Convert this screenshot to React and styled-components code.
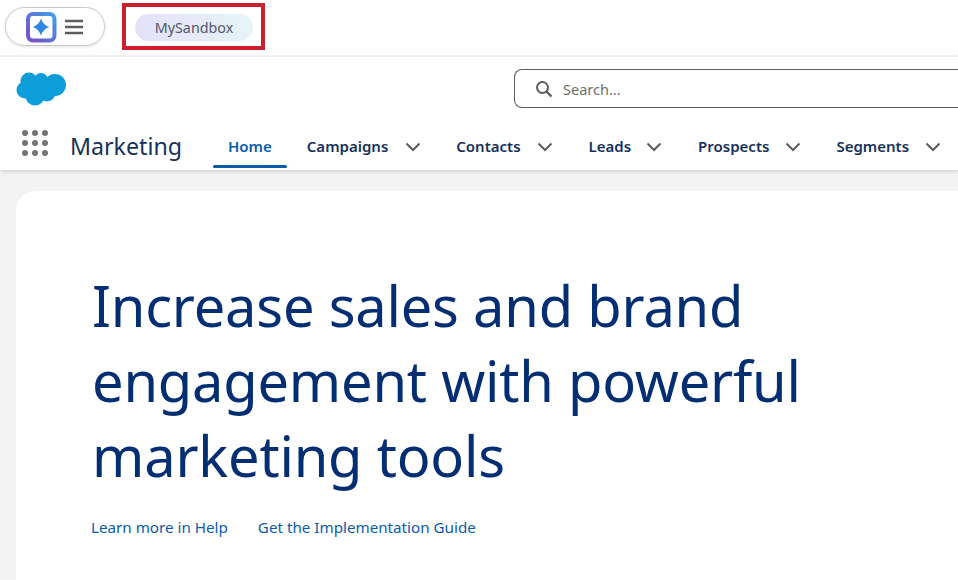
import styled, { createGlobalStyle } from "styled-components";

const GlobalStyle = createGlobalStyle`
	html,
	body {
		margin: 0;
		height: 100%;
		overflow: hidden;
		background: #f3f3f3;
		font-family: "Noto Sans", "Open Sans", sans-serif;
	}
`;

const Page = styled.div`
	width: 958px;
	height: 580px;
	display: flex;
	flex-direction: column;
	overflow: hidden;
`;

const TopBar = styled.div`
	height: 55px;
	flex-shrink: 0;
	background: #fff;
	display: flex;
	align-items: flex-start;
	padding: 3px 0 0 5px;
	box-sizing: border-box;
`;

const AgentPill = styled.div`
	width: 100px;
	height: 39px;
	margin-top: 4px;
	box-sizing: border-box;
	border: 1px solid #c9c9c9;
	border-radius: 20px;
	box-shadow: 0 1px 3px rgba(0, 0, 0, 0.12);
	display: flex;
	align-items: center;
	padding-left: 19px;
	gap: 8px;
`;

const HighlightBox = styled.div`
	width: 143px;
	height: 47px;
	margin-left: 17px;
	box-sizing: border-box;
	border: 4px solid #c9202e;
	display: flex;
	align-items: center;
	padding: 2px 0 0 9px;
`;

const OrgPill = styled.div`
	width: 118px;
	height: 27px;
	border-radius: 14px;
	background: linear-gradient(90deg, #e3e2f8 0%, #e6f4f8 100%);
	color: #54566b;
	font-size: 14.3px;
	display: flex;
	align-items: center;
	justify-content: center;
`;

const Header = styled.header`
	margin-top: 2px;
	height: 113px;
	flex-shrink: 0;
	background: #fff;
	box-shadow: 0 2px 4px rgba(0, 0, 0, 0.12);
	display: flex;
	flex-direction: column;
	position: relative;
`;

const SearchRow = styled.div`
	height: 64px;
	flex-shrink: 0;
	display: flex;
	align-items: flex-start;
	padding-left: 16px;
`;

const Logo = styled.svg`
	width: 51px;
	height: 36px;
	margin-top: 13px;
	flex-shrink: 0;
`;

const SearchBox = styled.div`
	width: 460px;
	height: 39px;
	margin: 12px 0 0 447px;
	flex-shrink: 0;
	box-sizing: border-box;
	border: 1px solid #5c5c5c;
	border-right: none;
	border-radius: 8px 0 0 8px;
	display: flex;
	align-items: center;
	padding-left: 20px;
	gap: 10px;
	color: #706e6b;
	font-size: 14.5px;
`;

const NavRow = styled.nav`
	flex: 1;
	display: flex;
	align-items: stretch;
	padding-left: 22px;
`;

const Waffle = styled.div`
	width: 26px;
	height: 26px;
	margin-top: 9px;
	display: grid;
	grid-template-columns: repeat(3, 6px);
	grid-auto-rows: 6px;
	gap: 4px;
`;

const Dot = styled.span`
	border-radius: 50%;
	background: #747474;
`;

const AppName = styled.div`
	margin-left: 22px;
	width: 143px;
	padding-top: 2px;
	font-size: 23.2px;
	line-height: 46px;
	color: #16325c;
`;

const NavItem = styled.div`
	display: flex;
	align-items: flex-start;
	box-sizing: border-box;
	height: 100%;
	margin-right: ${(p) => p.$gap}px;
	padding: ${(p) => (p.$active ? "2px 15px 0" : "2px 0 0")};
	position: relative;
	color: ${(p) => (p.$active ? "#0b5cab" : "#16325c")};
	font-size: 15px;
	font-weight: 600;
	line-height: 46px;
	white-space: nowrap;
`;

const ActiveBar = styled.span`
	position: absolute;
	left: 0;
	right: 0;
	bottom: 2px;
	height: 3px;
	border-radius: 2px;
	background: #0b5cab;
`;

const Chevron = styled.svg`
	width: 16px;
	height: 10px;
	margin: 19px 0 0 ${(p) => p.$left}px;
	flex-shrink: 0;
`;

const Card = styled.main`
	margin: 21px 0 0 16px;
	flex: 1;
	background: #fff;
	border-radius: 20px 0 0 0;
	padding: 77px 0 0 76px;
`;

const Title = styled.h1`
	margin: 0;
	width: 760px;
	color: #032e71;
	font-size: 56px;
	font-weight: 400;
	letter-spacing: -0.2px;
	line-height: 75px;
`;

const Links = styled.div`
	margin: 23px 0 0 -1px;
	display: flex;
	gap: 30px;
`;

const HelpLink = styled.a`
	color: #0b5cab;
	font-size: 15.2px;
	line-height: 22px;
`;

const navItems = [
	{ label: "Campaigns", left: 17, gap: 35 },
	{ label: "Contacts", left: 16, gap: 36 },
	{ label: "Leads", left: 15, gap: 36 },
	{ label: "Prospects", left: 16, gap: 35 },
	{ label: "Segments", left: 16, gap: 0 },
];

const App = () => {
	return (
		<Page>
			<GlobalStyle />
			<TopBar>
				<AgentPill>
					<svg width="32" height="32" viewBox="0 0 32 32">
						<defs>
							<linearGradient id="frame" x1="1" y1="0" x2="0" y2="1">
								<stop offset="0" stopColor="#3f9fe4" />
								<stop offset="1" stopColor="#7b4cc6" />
							</linearGradient>
						</defs>
						<rect x="3" y="3" width="26.5" height="26.5" rx="5" fill="#fff" stroke="url(#frame)" strokeWidth="4" />
						<path d="M16 7.5 C17.5 12 20 14.5 24.5 16 C20 17.5 17.5 20 16 24.5 C14.5 20 12 17.5 7.5 16 C12 14.5 14.5 12 16 7.5 Z" fill="#2f86e0" />
					</svg>
					<svg width="18" height="16" viewBox="0 0 18 16">
						<path d="M0 2h18M0 8h18M0 14h18" stroke="#5c5c5c" strokeWidth="2.4" />
					</svg>
				</AgentPill>
				<HighlightBox>
					<OrgPill>MySandbox</OrgPill>
				</HighlightBox>
			</TopBar>

			<Header>
				<SearchRow>
					<Logo viewBox="0 0 51 36">
						<g fill="#0d9dda">
							<circle cx="13" cy="11" r="8.5" />
							<circle cx="25" cy="10" r="7" />
							<circle cx="39" cy="15" r="11" />
							<circle cx="9" cy="20" r="8.5" />
							<circle cx="19" cy="26" r="9.5" />
							<circle cx="31" cy="23" r="8.5" />
							<rect x="12" y="10" width="24" height="14" />
						</g>
					</Logo>
					<SearchBox>
						<svg width="18" height="18" viewBox="0 0 18 18" fill="none">
							<circle cx="7.5" cy="7.5" r="5.5" stroke="#5c5c5c" strokeWidth="2" />
							<path d="M11.5 11.5L16.5 16.5" stroke="#5c5c5c" strokeWidth="2.4" />
						</svg>
						Search...
					</SearchBox>
				</SearchRow>
				<NavRow>
					<Waffle>
						{Array.from({ length: 9 }, (_, i) => (
							<Dot key={i} />
						))}
					</Waffle>
					<AppName>Marketing</AppName>
					<NavItem $active $gap={20}>
						Home
						<ActiveBar />
					</NavItem>
					{navItems.map((item) => (
						<NavItem key={item.label} $gap={item.gap}>
							{item.label}
							<Chevron $left={item.left} viewBox="0 0 16 10" fill="none">
								<path d="M1.5 1.5L8 8L14.5 1.5" stroke="#5c5c5c" strokeWidth="2" />
							</Chevron>
						</NavItem>
					))}
				</NavRow>
			</Header>

			<Card>
				<Title>Increase sales and brand engagement with powerful marketing tools</Title>
				<Links>
					<HelpLink>Learn more in Help</HelpLink>
					<HelpLink>Get the Implementation Guide</HelpLink>
				</Links>
			</Card>
		</Page>
	);
};

export default App;
